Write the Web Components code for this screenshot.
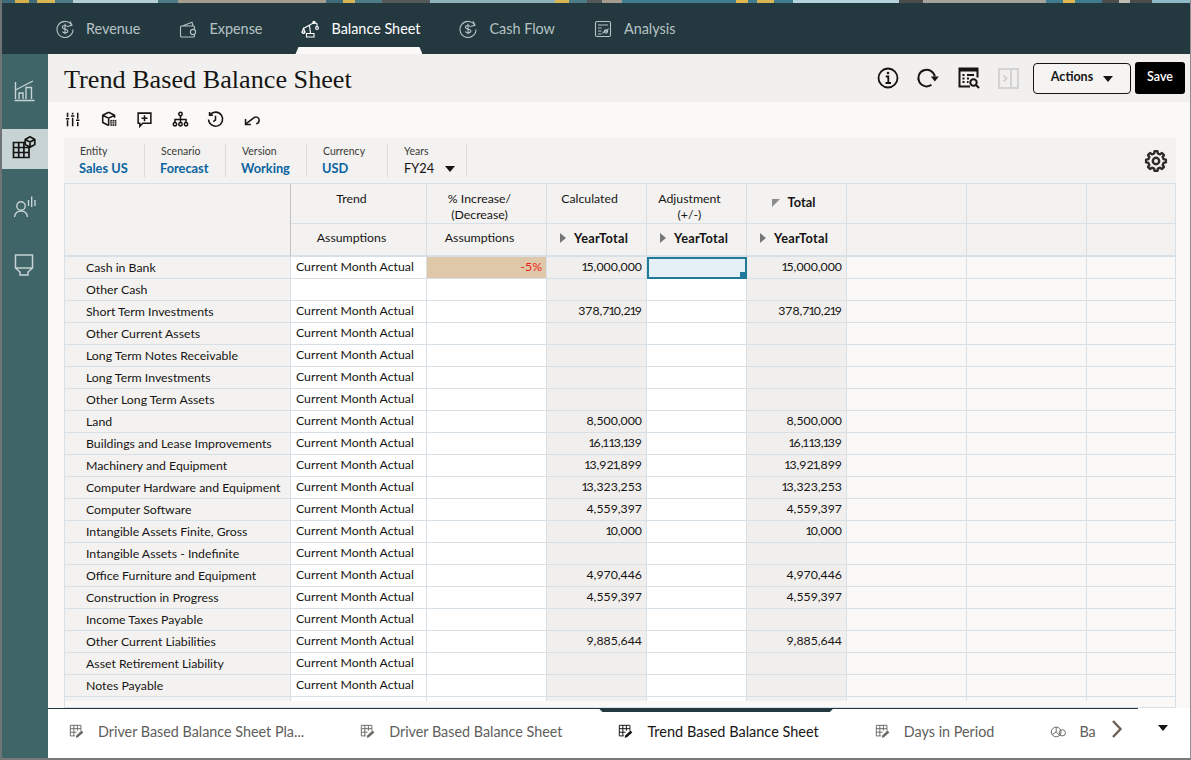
<!DOCTYPE html>
<html lang="en"><head><meta charset="utf-8"><title>Trend Based Balance Sheet</title>
<style>
html,body{margin:0;padding:0;background:#fff}
body{font-family:"Lato","Noto Sans",sans-serif;width:1191px;height:760px;overflow:hidden}
</style></head><body>
<bs-app>
  <bs-topnav></bs-topnav>
  <bs-rail></bs-rail>
  <bs-titlebar>Trend Based Balance Sheet</bs-titlebar>
  <bs-toolbar></bs-toolbar>
  <bs-pov></bs-pov>
  <bs-grid></bs-grid>
  <bs-tabs></bs-tabs>
</bs-app>
<script>
function gearPath(cx,cy,ro,ri,n){
  let d='';
  for(let k=0;k<n;k++){
    const a=k*2*Math.PI/n,w=Math.PI/n;
    const pts=[[ri,a-w*.62],[ro,a-w*.36],[ro,a+w*.36],[ri,a+w*.62]];
    pts.forEach((p,j)=>{d+=(k==0&&j==0?'M':'L')+(cx+p[0]*Math.cos(p[1])).toFixed(2)+' '+(cy+p[0]*Math.sin(p[1])).toFixed(2);});
  }
  return d+'Z';
}
const P={
 revenue:'<path d="M16.800 6.200A8 8 0 1 0 18 10.500" fill="none"/><path d="M15 2.300 17 6.300 13 7.200" fill="none"/><path d="M12.700 7.900c-.5-1-1.500-1.400-2.700-1.400-1.400 0-2.600.7-2.600 1.800 0 2.500 5.400 1.200 5.400 3.800 0 1.100-1.200 1.800-2.700 1.800-1.200 0-2.300-.5-2.800-1.400M10 4.800v10.400" fill="none"/>',
 expense:'<path d="M4.500 7 14 3.200 15 7M16.500 10.400V8a1 1 0 0 0-1-1h-12a1 1 0 0 0-1 1v9a1 1 0 0 0 1 1h12a1 1 0 0 0 1-1v-1.400" fill="none"/><circle cx="15" cy="13" r="2.600" fill="none"/>',
 balance:'<path d="M3.500 9.500 14 3.500l3 1M9.500 6.500l1 8M6.500 14.500h7.500v3.500H6.500zM3.500 9.500 2 13h3zM2 13a1.500 1.500 0 0 0 3 0M17 4.500v3" fill="none"/><circle cx="14" cy="3.500" r="1.100" fill="none"/><circle cx="17" cy="9" r="1.400" fill="none"/>',
 analysis:'<rect x="2.500" y="2.500" width="15" height="15" rx="1.500" fill="none"/><path d="M5 6h10M5 9h3.500M5 12h3.500M5 15h3.500M9.500 14.500l2.500-3 1.500 1 2-3" fill="none"/><circle cx="13" cy="12.500" r="1.600" fill="none"/>',
 chart:'<path d="M1.500 21.500h20M2.500 20V3M2.500 11 20 2M6 20v-6h4v6M13 20V8.500h5.500V20" fill="none"/>',
 table:'<path d="M1.500 6.500h15.500v15H1.500zM6.700 6.500v15M11.900 6.500v15M1.500 11.500h15.500M1.500 16.500h15.500" fill="none"/><path d="M18 .8l4.800 2.600v5.200L18 11.200l-4.800-2.600V3.400zM13.200 3.400l4.800 2.600 4.800-2.600M18 6v5.200" fill="#c7d3d4"/>',
 person:'<circle cx="8" cy="11" r="4.200" fill="none"/><path d="M1.500 22c.6-4 3-6 6.500-6s6 2 6.500 6M15.500 11V5M18.700 12V1.500M22 11V5" fill="none"/>',
 funnel:'<path d="M2.500 2h17v13h-17zM2.500 15 7 19v3h8v-3l4.500-4" fill="none"/>',
 sliders:'<path d="M3 2v5M3 11v7M1 9h4M9 2v2M9 8v10M7 6h4M15 2v7M15 13v5M13 11h4" fill="none"/>',
 cube:'<path d="M9 1.500 16 5v3M9 1.500 2 5v8.500L9 17M2 5l7 3.500L16 5M9 8.500V17" fill="none"/><path d="M11 10.500h7v7h-7z" fill="currentColor" stroke="none"/><path d="M13.300 10.500v7M15.700 10.500v7M11 12.800h7M11 15.200h7" fill="none" stroke="#fbf9f8" stroke-width=".7"/>',
 comment:'<path d="M2.500 2.500h15v12H8L4.500 18v-3.500h-2zM10 5v7M6.500 8.500h7" fill="none"/>',
 hier:'<circle cx="10" cy="3.500" r="2" fill="none"/><circle cx="3.500" cy="15.500" r="2" fill="none"/><circle cx="10" cy="15.500" r="2" fill="none"/><circle cx="16.500" cy="15.500" r="2" fill="none"/><path d="M10 5.500v8M3.500 13.500V10h13v3.500" fill="none"/>',
 history:'<path d="M3.800 4.200A8.300 8.300 0 1 1 1.800 10M3 1.200V5h4M10 5.500V10.500L7.500 12.500" fill="none"/>',
 undo:'<path d="M3 15.500 13 7.800c3-1.800 6 .2 6 3 0 2.300-1.500 3.800-3.500 4.200" fill="none"/><path d="M3 9.500v6.300h6.300" fill="none"/>',
 info:'<circle cx="11" cy="11" r="9.500" fill="none"/><path d="M8.800 9.500H11.300V16M8.500 16h5.500" fill="none"/><circle cx="11" cy="6" r="1.300" fill="currentColor" stroke="none"/>',
 refresh:'<path d="M15.500 17.800A8.300 8.300 0 1 1 18.800 9.500" fill="none"/><path d="M14.800 9.500h8l-4 5z" fill="currentColor" stroke="none"/>',
 report:'<path d="M12 19.500H1.500V1.500h18v9" fill="none"/><path d="M1.500 1.500h18v3h-18z" fill="currentColor" stroke="none"/><path d="M4.500 8h2M9 8h7M4.500 11.500h2M9 11.500h2M4.500 15h2M9 15h1.500" fill="none"/><circle cx="15.500" cy="15.500" r="3.200" fill="none"/><path d="M18 18l3 3" fill="none"/>',
 panel:'<path d="M1 1h19v19H1zM13 1v19M5.500 7.500l3 3-3 3" fill="none"/>',
 gear:`<path d="${gearPath(11,11,10,7.800,8)}" fill="none" stroke-linejoin="round"/><circle cx="11" cy="11" r="3.200" fill="none"/>`,
 form:'<path d="M1.500 1.500h12v6M1.500 1.500v12h5M1.500 5.300h12M1.500 9.300h7M5.500 1.500v12M9.500 1.500v6" fill="none"/><path d="M7.500 15.500l.7-2.500 6-5.500 2 2-6 5.500z" fill="currentColor" stroke="none"/>',
 pie:'<circle cx="7" cy="9" r="5.500" fill="none"/><path d="M7 3.500V9l4 4M7 9 2.500 12" fill="none"/><circle cx="14" cy="10" r="3.500" fill="none"/>'
};
function define(name,html){customElements.define(name,class extends HTMLElement{
  connectedCallback(){ if(this.shadowRoot)return; this.attachShadow({mode:'open'}).innerHTML=typeof html==='function'?html(this):html; }
});}
define('bs-icon',el=>{
  const s=+el.getAttribute('size')||20,v=+el.getAttribute('vb')||20,w=el.getAttribute('sw')||1.300;
  return `<style>:host{display:inline-flex;width:${s}px;height:${s}px;flex:none}svg{width:100%;height:100%;display:block;stroke:currentColor;stroke-width:${w};fill:currentColor;overflow:visible}</style><svg viewBox="0 0 ${v} ${v}" aria-hidden="true">${P[el.getAttribute('name')]}</svg>`;
});
define('bs-app',`<style>
:host{display:grid;box-sizing:border-box;width:1191px;height:760px;grid-template-columns:46px 1fr;grid-template-rows:54px 48px 36px 45px 1fr 50px;
 border-left:2px solid #6f7476;border-right:1px solid #8b8f91;border-bottom:2px solid #77797a;background:#fbf9f8}
::slotted(bs-topnav){grid-column:1/3}
::slotted(bs-rail){grid-row:2/7}
</style><slot></slot>`);
define('bs-topnav',()=>{
 const items=[['revenue','Revenue'],['expense','Expense'],['balance','Balance Sheet',1],['revenue','Cash Flow'],['analysis','Analysis']];
 const s=[['#3f6c78',13],['#d4b04a',27],['#3f6c78',35],['#d8b656',53],['#4d7c87',71],['#b5ced3',156],['#4d7c87',176],['#a39c8f',324],['#3f6c78',341],['#d8b656',353],['#4d7c87',380],['#55595a',428],['#8fb3ba',553],['#d8b656',567],['#4d7c87',585],['#55595a',600],['#a39c8f',620],['#3f7c90',734],['#e0b84e',746],['#3f7c90',755],['#d8b656',772],['#3f7c90',791],['#b5d3da',897],['#4a4d4c',921],['#a5a29b',1044],['#3f7c90',1061],['#e0b84e',1073],['#3f7c90',1100],['#4a4d4c',1117],['#bfbcb2',1128],['#4a4d4c',1150],['#8fb9c6',1191]];
 let p=0;const g=s.map(c=>{const r=`${c[0]} ${p}px ${c[1]}px`;p=c[1];return r;}).join(',');
 return `<style>
:host{display:block;background:#24393f;position:relative}
.strip{height:3px;background:linear-gradient(90deg,${g})}
nav{display:flex;gap:38px;height:51px;padding-left:53px;box-sizing:border-box;align-items:center}
.i{position:relative;display:flex;align-items:center;gap:11px;height:51px;color:#b6c2c4;font-size:14.400px}
.a{color:#fff}
.a::after{content:"";position:absolute;left:-5px;right:-2px;bottom:0;height:7px;background:#fbf9f8;clip-path:polygon(3px 0,calc(100% - 3px) 0,100% 100%,0 100%)}
</style><div class="strip"></div><nav>${items.map(i=>`<div class="i ${i[2]?'a':''}"><bs-icon name="${i[0]}" sw="1.100"></bs-icon><span>${i[1]}</span></div>`).join('')}</nav>`;
});
define('bs-rail',`<style>
:host{display:flex;flex-direction:column;gap:18px;background:#3f6569;padding-top:17px;box-sizing:border-box;color:#c7d3d4}
.i{box-sizing:border-box;height:40px;display:flex;align-items:center;justify-content:center;padding:0 2px 2px 0}
.s{background:#c7d3d4;color:#161513}
</style>
<div class="i"><bs-icon name="chart" size="23" vb="23" sw="1.400"></bs-icon></div>
<div class="i s"><bs-icon name="table" size="24" vb="24" sw="1.700"></bs-icon></div>
<div class="i"><bs-icon name="person" size="23" vb="23" sw="1.400"></bs-icon></div>
<div class="i"><bs-icon name="funnel" size="22" vb="22" sw="1.500"></bs-icon></div>`);
define('bs-titlebar',`<style>
:host{display:flex;align-items:center;background:#f1f0ee;padding:0 5px 0 16px;color:#161513}
h1{margin:0;font:400 26.200px "Liberation Serif","DejaVu Serif",serif;flex:1;padding-top:3px}
.t{display:flex;align-items:center}
.t bs-icon{margin-right:18px}
.t bs-icon:nth-child(1){margin-right:17px}
.t bs-icon:nth-child(2){margin-right:20px}
.t bs-icon:last-child{margin-right:17px}
.b{box-sizing:border-box;height:31px;width:98px;border:1px solid #161513;border-radius:4px;background:#f5f4f2;display:flex;align-items:center;justify-content:center;gap:10px;font:700 12.500px "Lato","Noto Sans",sans-serif;margin-left:-3px;padding-bottom:3px}
.b i{width:0;height:0;border:5px solid transparent;border-top:6px solid #161513;border-bottom:0;margin-top:4px}
.s{box-sizing:border-box;height:32px;width:50px;margin-left:4px;background:#000;color:#fff;border-radius:3px;display:flex;align-items:center;justify-content:center;font:600 12.500px "Lato","Noto Sans",sans-serif;padding-bottom:3px}
</style><h1><slot></slot></h1><div class="t">
<bs-icon name="info" size="22" vb="22" sw="1.800"></bs-icon>
<bs-icon name="refresh" size="22" vb="22" sw="2"></bs-icon>
<bs-icon name="report" size="22" vb="22" sw="2"></bs-icon>
<bs-icon name="panel" size="21" vb="21" sw="2" style="color:#d3d3d3"></bs-icon>
</div><div class="b">Actions <i></i></div><div class="s">Save</div>`);
define('bs-toolbar',()=>`<style>
:host{display:flex;align-items:center;gap:18.500px;padding:0 0 1px 17px;color:#161513;background:#fbf9f8}
</style>${['sliders','cube','comment','hier','history','undo'].map(n=>`<bs-icon name="${n}" size="17" vb="20" sw="1.800"></bs-icon>`).join('')}`);
define('bs-pov',()=>{
 const it=[['Entity','Sales US'],['Scenario','Forecast'],['Version','Working'],['Currency','USD']];
 return `<style>
:host{display:flex;align-items:center;background:#f3f2f0;margin:0 14px 0 16px;padding-left:0;color:#161513;position:relative}
.i{box-sizing:border-box;width:81px;height:33px;padding:1px 0 0 15px;border-right:1px solid #dcdad7;display:flex;flex-direction:column;gap:3px}
.l{font-size:10.500px;color:#3b3a38;line-height:12px;padding-left:1px}
.v{font-size:12.800px;font-weight:700;color:#0b64a0;line-height:16px}
.y{width:79px}
.y .v{color:#161513;font-weight:400;display:flex;justify-content:space-between;padding-right:11px;padding-left:1px}
.y i{width:0;height:0;border:5.500px solid transparent;border-top:6.500px solid #161513;border-bottom:0;margin-top:6px}
bs-icon{margin-left:auto;margin-right:9px;color:#2c2b29}
</style>${it.map(i=>`<div class="i"><span class="l">${i[0]}</span><span class="v">${i[1]}</span></div>`).join('')}
<div class="i y"><span class="l">Years</span><span class="v">FY24<i></i></span></div>
<bs-icon name="gear" size="22" vb="22" sw="2.400"></bs-icon>`;
});
define('bs-grid',()=>{
 const R=[['Cash in Bank','15,000,000'],['Other Cash',''],['Short Term Investments','378,710,219'],['Other Current Assets',''],['Long Term Notes Receivable',''],['Long Term Investments',''],['Other Long Term Assets',''],['Land','8,500,000'],['Buildings and Lease Improvements','16,113,139'],['Machinery and Equipment','13,921,899'],['Computer Hardware and Equipment','13,323,253'],['Computer Software','4,559,397'],['Intangible Assets Finite, Gross','10,000'],['Intangible Assets - Indefinite',''],['Office Furniture and Equipment','4,970,446'],['Construction in Progress','4,559,397'],['Income Taxes Payable',''],['Other Current Liabilities','9,885,644'],['Asset Retirement Liability',''],['Notes Payable',''],['','']];
 const tri='<i class="tr"></i>';
 const num=v=>v.replace(/1+/g,m=>`<span class="o">${m}</span>`);
 let h=`<div class="c h corner"></div>
 <div class="c h t">Trend</div><div class="c h t">% Increase/<br>(Decrease)</div><div class="c h t">Calculated</div><div class="c h t">Adjustment<br>(+/-)</div><div class="c h m"><i class="tl"></i><b>Total</b></div><div class="c h"></div><div class="c h"></div><div class="c h e"></div>
 <div class="c h s m z">Assumptions</div><div class="c h s m z">Assumptions</div><div class="c h s y">${tri}<b>YearTotal</b></div><div class="c h s y">${tri}<b>YearTotal</b></div><div class="c h s y">${tri}<b>YearTotal</b></div><div class="c h s"></div><div class="c h s"></div><div class="c h s e"></div>`;
 R.forEach((r,i)=>{
  const last=!r[0];
  h+=`<div class="c rh">${r[0]}</div>
  <div class="c w tx">${(i==1||last)?'':'Current Month Actual'}</div>
  <div class="c w n ${i==0?'pct':''}">${i==0?'-5%':''}</div>
  <div class="c g n">${num(r[1])}</div>
  <div class="c w n ${i==0?'sel':''}">${i==0?'<u></u>':''}</div>
  <div class="c g n">${num(r[1])}</div>
  <div class="c f"></div><div class="c f"></div><div class="c f e"></div>`;
 });
 return `<style>
:host{display:block;margin:0 14px 0 16px;box-sizing:border-box;height:525px;border:1px solid #d8e0e7;padding-bottom:6px;color:#161513;font-size:12.300px;background:#fbf9f8}
.g0{display:grid;height:100%;overflow:hidden;grid-template-columns:226px 136px 120px 100px 100px 100px 120px 120px 1fr;grid-template-rows:40px 33px repeat(21,22px)}
.c{box-sizing:border-box;border-right:1px solid #d8e0e7;border-bottom:1px solid #d8e0e7;white-space:nowrap;overflow:hidden;position:relative}
.e{border-right:0}
.h{background:#f3f2f0;text-align:center;line-height:16px}
.corner{grid-row:1/3;border-bottom:2px solid #d8e0e7;border-right:1px solid #c4c3c0}
.t{padding:7px 14px 0 0}
.z{padding-right:14px}
.m{display:flex;align-items:center;justify-content:center;padding-bottom:4px}
.m .tl{width:0;height:0;border-top:8px solid #8c8c8c;border-right:8px solid transparent;margin-right:8px;margin-top:2px}
.m b{padding-right:6px;font-size:12.800px}
.s{border-bottom:2px solid #d8e0e7}
.y{display:flex;align-items:center;justify-content:flex-start;padding:0 0 4px 13px}
.y b{font-size:12.800px;letter-spacing:.3px}
.tr{width:0;height:0;border-left:6px solid #777;border-top:5px solid transparent;border-bottom:5px solid transparent;margin-right:8px}
.rh{background:#f3f2f0;padding-left:21px;line-height:22px}
.w{background:#fff}
.g{background:#f1efed}
.f{background:#fbf9f8}
.tx{padding-left:5px;line-height:20px}
.n{text-align:right;padding-right:4px;line-height:20px}
.o{margin:0 -.600px 0 -1.200px;letter-spacing:-1.200px}
.pct{background:#dfc8a9;color:#f01818}
.sel{background:#e4f0f5;border:2px solid #1f7a99;overflow:visible}
.sel u{position:absolute;right:-1px;bottom:-1px;width:6px;height:6px;background:#1f7a99}
</style><div class="g0">${h}</div>`;
});
define('bs-tabs',()=>{
 const T=[['form','Driver Based Balance Sheet Pla...'],['form','Driver Based Balance Sheet'],['form','Trend Based Balance Sheet',1],['form','Days in Period'],['pie','Ba']];
 return `<style>
:host{display:flex;position:relative;background:#fff;color:#605e5c;font-size:14.350px}
.bar{width:1090px;box-sizing:border-box;border-top:1px solid #24393f;display:flex;gap:56px;padding-left:21px;height:100%;position:relative}
.t{position:relative;display:flex;align-items:center;gap:14px;white-space:nowrap;height:44px;flex:none}
.t bs-icon{color:#6b6966}
.a{color:#161513;font-size:14.500px}.a bs-icon{color:#161513}
.a::before{content:"";position:absolute;left:-20px;right:-15px;top:0;height:4px;margin-top:-1px;background:#24393f;clip-path:polygon(0 0,100% 0,calc(100% - 4px) 100%,4px 100%)}
.ch{position:absolute;left:1063px;top:12px;color:#6c5f55}
.dd{position:absolute;left:1110px;top:17px;width:0;height:0;border:5.500px solid transparent;border-top:6px solid #161513;border-bottom:0}
</style><div class="bar">${T.map(t=>`<div class="t ${t[2]?'a':''}"><bs-icon name="${t[0]}" size="15" vb="17" sw="1.100"></bs-icon><span>${t[1]}</span></div>`).join('')}</div>
<svg class="ch" width="12" height="18" viewBox="0 0 12 18" fill="none" stroke="currentColor" stroke-width="2.400"><path d="M2 1l7.500 8L2 17"/></svg><div class="dd"></div>`;
});
</script>
</body></html>
